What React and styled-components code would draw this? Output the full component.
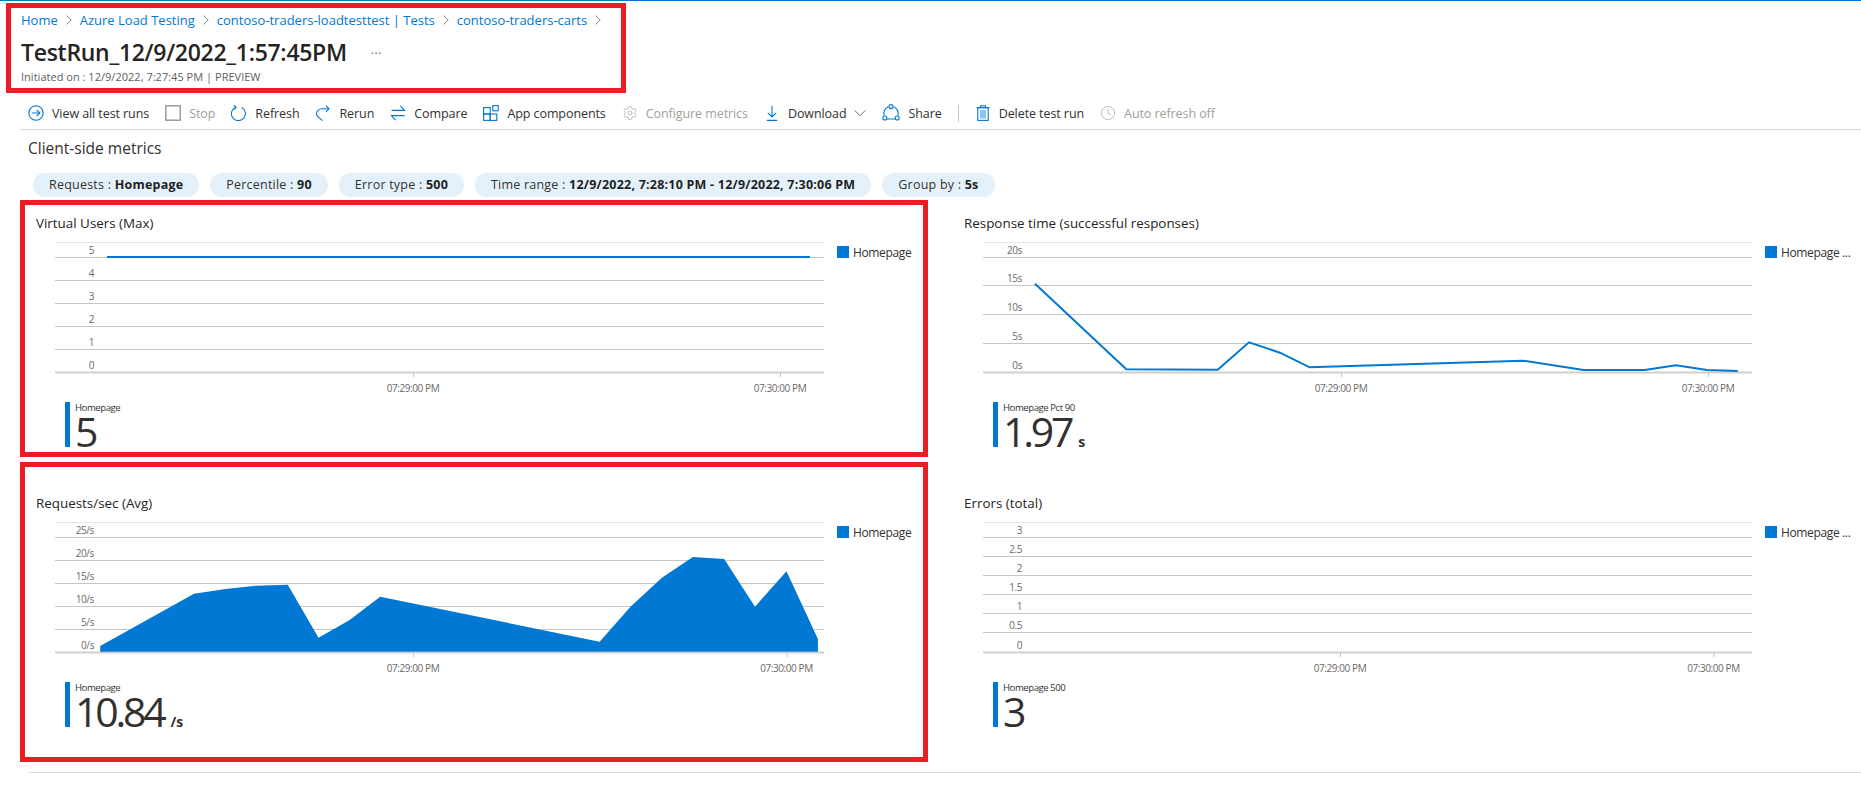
import React from "react";
import styled, { createGlobalStyle } from "styled-components";
import { Settings, Clock } from "lucide-react";

const BLUE = "#0078d4";
const RED = "#ed1c24";
const FONT = `"Open Sans", "Noto Sans", sans-serif`;

const GlobalStyle = createGlobalStyle`
  html, body {
    margin: 0;
    padding: 0;
    background: #fff;
    font-family: ${FONT};
    color: #323130;
  }
`;

const Page = styled.div`
  width: 1861px;
  height: 785px;
  overflow: hidden;
  border-top: 1px solid ${BLUE};
  box-sizing: border-box;
`;

const HeaderBox = styled.header`
  box-sizing: border-box;
  width: 620px;
  height: 90px;
  margin: 2px 0 0 6px;
  padding: 2px 0 0 10px;
  border: 5px solid ${RED};
`;

const Breadcrumb = styled.nav`
  display: flex;
  align-items: center;
  gap: 8px;
  height: 20px;
`;

const Crumb = styled.span`
  font-size: 13px;
  letter-spacing: 0;
  color: ${BLUE};
`;

const TitleRow = styled.div`
  display: flex;
  align-items: center;
  height: 32px;
  margin-top: 6px;
`;

const Title = styled.h1`
  margin: 0;
  font-size: 23px;
  font-weight: 600;
  letter-spacing: -0.29px;
  line-height: 32px;
  color: #252423;
`;

const More = styled.span`
  margin: -6px 0 0 24px;
  font-size: 12px;
  letter-spacing: 0.6px;
  color: #605e5c;
`;

const Subtitle = styled.div`
  margin-top: 1px;
  font-size: 11px;
  letter-spacing: 0.02px;
  line-height: 16px;
  color: #605e5c;
`;

const Toolbar = styled.div`
  display: flex;
  align-items: center;
  gap: 16px;
  height: 32px;
  margin: 4px 0 0 20px;
  padding-left: 8px;
  border-bottom: 1px solid #d9d8d6;
`;

const ToolItem = styled.div`
  display: flex;
  align-items: center;
  gap: 8px;
  font-size: 12.5px;
  letter-spacing: -0.08px;
  white-space: nowrap;
  color: ${({ $disabled }) => ($disabled ? "#a19f9d" : "#323130")};

  svg {
    flex: none;
    display: block;
  }
`;

const ToolDivider = styled.div`
  width: 1px;
  height: 17px;
  background: #c8c6c4;
`;

const SectionTitle = styled.h2`
  margin: 8px 0 0 28px;
  font-size: 15.5px;
  font-weight: 500;
  line-height: 20px;
`;

const ChipRow = styled.div`
  display: flex;
  gap: 11px;
  margin: 15px 0 0 33px;
`;

const Chip = styled.div`
  height: 24px;
  padding: 0 16px;
  border-radius: 12px;
  background: #e5f1fa;
  font-size: 12.5px;
  letter-spacing: 0.22px;
  line-height: 24px;
  white-space: nowrap;

  b {
    font-weight: 700;
    color: #201f1e;
  }
`;

const ChartGrid = styled.div`
  display: grid;
  grid-template-columns: 908px 1fr;
  grid-template-rows: 257px 300px;
  column-gap: 20px;
  row-gap: 5px;
  margin: 3px 0 0 20px;
`;

const Card = styled.section`
  box-sizing: border-box;
  padding-top: ${({ $top }) => $top}px;
  border: 5px solid ${({ $marked }) => ($marked ? RED : "transparent")};
  overflow: hidden;
`;

const CardTitle = styled.h3`
  margin: 0 0 9px 11px;
  font-size: 13.4px;
  font-weight: 400;
  line-height: 20px;
  color: #252423;
`;

const ChartRow = styled.div`
  display: flex;
  margin-left: 30px;
`;

const ChartSvg = styled.svg`
  display: block;
  flex: none;
  font-family: ${FONT};
`;

const Legend = styled.div`
  display: flex;
  align-items: flex-start;
  gap: 4px;
  margin: 4px 0 0 13px;
  font-size: 12px;
  letter-spacing: -0.36px;
  line-height: 14px;
  white-space: nowrap;
`;

const LegendSwatch = styled.span`
  width: 12px;
  height: 12px;
  background: ${BLUE};
`;

const Summary = styled.div`
  box-sizing: border-box;
  height: 45px;
  margin: 4px 0 0 40px;
  padding-left: 5px;
  border-left: 5px solid ${BLUE};
  overflow: hidden;
`;

const SummaryLabel = styled.div`
  font-size: 9.5px;
  letter-spacing: -0.4px;
  line-height: 12px;
`;

const SummaryValue = styled.div`
  font-size: 41px;
  font-weight: 500;
  letter-spacing: -3.2px;
  line-height: 35px;
  color: #323130;

  small {
    margin-left: 7px;
    font-size: 14px;
    font-weight: 700;
    letter-spacing: 0;
  }
`;

const BottomRule = styled.div`
  height: 1px;
  margin: 10px 0 0 28px;
  background: #dedddc;
`;

const Stroke = ({ children, size = 16, color = BLUE, sw = 1.1 }) => (
  <svg width={size} height={size} viewBox="0 0 16 16" fill="none" stroke={color} strokeWidth={sw}>
    {children}
  </svg>
);

const ViewAllIcon = () => (
  <Stroke>
    <circle cx="8" cy="8" r="7.2" />
    <path d="M3.8 8h8M8.6 4.8 11.8 8l-3.2 3.2" />
  </Stroke>
);

const StopIcon = () => (
  <Stroke color="#8f8d8b" sw={1.3}>
    <rect x="0.8" y="0.8" width="14.4" height="14.4" />
  </Stroke>
);

const RefreshIcon = () => (
  <Stroke>
    <path d="M10.6 2.4A7 7 0 1 1 4.6 2.2" />
    <path d="M2.6 0.4 5 2 3.6 4.6" />
  </Stroke>
);

const RerunIcon = () => (
  <Stroke>
    <path d="M14 3.7H7.4C4.6 3.7 1.4 6 1.4 8.6c0 1.6 1 2.8 2 3.6l4 3.4" />
    <path d="M11 0.6 14 3.7 11 6.8" />
  </Stroke>
);

const CompareIcon = () => (
  <Stroke>
    <path d="M1.5 5.4H14.6L10.4 0.8" />
    <path d="M14.6 10.6H1.5L5.6 15.2" />
  </Stroke>
);

const AppIcon = () => (
  <Stroke>
    <rect x="0.6" y="2.6" width="6.6" height="6.4" />
    <rect x="0.6" y="9" width="6.6" height="6.4" />
    <rect x="7.2" y="9" width="6.6" height="6.4" />
    <rect x="9.8" y="0.6" width="5.4" height="5.2" />
  </Stroke>
);

const DownloadIcon = () => (
  <Stroke>
    <path d="M8 0.8v11M3.8 7.8 8 12l4.2-4.2M2.8 15.4h10.4" />
  </Stroke>
);

const ChevronIcon = () => (
  <Stroke color="#605e5c" sw={1.2} size={12}>
    <path d="M0.8 4.4 8 11.6 15.2 4.4" />
  </Stroke>
);

const ShareIcon = () => (
  <svg width="18" height="18" viewBox="0 0 18 18" fill="none" stroke={BLUE} strokeWidth="1.1">
    <path d="M6.4 2.8A7 7 0 0 0 2.2 11.6M15.8 11.6A7 7 0 0 0 11.6 2.8M4.8 15h8.4" />
    <circle cx="9" cy="2.6" r="2" fill="#fff" />
    <circle cx="2.8" cy="14" r="2" fill="#fff" />
    <circle cx="15.2" cy="14" r="2" fill="#fff" />
  </svg>
);

const TrashIcon = () => (
  <Stroke sw={1.1}>
    <path d="M1.6 2.6h12.8M5.6 2.6V0.8h4.8v1.8" />
    <rect x="2.8" y="2.6" width="10.4" height="12.8" />
    <rect x="5" y="5" width="6" height="8.6" fill="#8cc4ee" stroke="none" />
  </Stroke>
);

const CrumbChevron = () => (
  <svg width="6" height="10" viewBox="0 0 6 10" fill="none" stroke="#8a8886" strokeWidth="1">
    <path d="M0.6 0.6 5.2 5 0.6 9.4" />
  </svg>
);

const axisColor = "#6b6967";

const Chart = ({ lines, labels, ticks, line, area }) => {
  const base = lines[lines.length - 1];
  return (
    <ChartSvg width="769" height="156" viewBox="0 0 769 156">
      <line x1="0" x2="769" y1="0.5" y2="0.5" stroke="#e6e5e4" />
      {lines.map((y, i) => (
        <line
          key={y}
          x1="0"
          x2="769"
          y1={y + 0.5}
          y2={y + 0.5}
          stroke={i === lines.length - 1 ? "#d2d0ce" : "#c8c6c4"}
          strokeWidth={i === lines.length - 1 ? 2 : 1}
        />
      ))}
      {labels.map((text, i) => (
        <text key={text} x="39" y={lines[i] - 3.5} fontSize="10" textAnchor="end" letterSpacing="-0.4" fill={axisColor}>
          {text}
        </text>
      ))}
      {ticks.map((x, i) => (
        <g key={x}>
          <line x1={x + 0.5} x2={x + 0.5} y1={base} y2={base + 5} stroke="#c8c6c4" />
          <text x={x} y="150" fontSize="10" textAnchor="middle" letterSpacing="-0.42" fill={axisColor}>
            {i === 0 ? "07:29:00 PM" : "07:30:00 PM"}
          </text>
        </g>
      ))}
      {area && <polygon points={area} fill={BLUE} />}
      {line && <polyline points={line} fill="none" stroke={BLUE} strokeWidth="2" />}
    </ChartSvg>
  );
};

const tools = [
  { icon: <ViewAllIcon />, text: "View all test runs" },
  { icon: <StopIcon />, text: "Stop", disabled: true },
  { icon: <RefreshIcon />, text: "Refresh" },
  { icon: <RerunIcon />, text: "Rerun" },
  { icon: <CompareIcon />, text: "Compare" },
  { icon: <AppIcon />, text: "App components" },
  { icon: <Settings size={16} strokeWidth={1} />, text: "Configure metrics", disabled: true },
  { icon: <DownloadIcon />, text: "Download", chevron: true },
  { icon: <ShareIcon />, text: "Share" },
  { divider: true },
  { icon: <TrashIcon />, text: "Delete test run" },
  { icon: <Clock size={16} strokeWidth={1} />, text: "Auto refresh off", disabled: true },
];

const chips = [
  ["Requests", "Homepage"],
  ["Percentile", "90"],
  ["Error type", "500"],
  ["Time range", "12/9/2022, 7:28:10 PM - 12/9/2022, 7:30:06 PM"],
  ["Group by", "5s"],
];

const cards = [
  {
    title: "Virtual Users (Max)",
    marked: true,
    top: 8,
    legend: "Homepage",
    chart: {
      lines: [15, 38, 61, 84, 107, 130],
      labels: ["5", "4", "3", "2", "1", "0"],
      ticks: [358, 725],
      line: "52,15 755,15",
    },
    label: "Homepage",
    value: "5",
  },
  {
    title: "Response time (successful responses)",
    top: 8,
    legend: "Homepage ...",
    chart: {
      lines: [15, 43, 72, 101, 130],
      labels: ["20s", "15s", "10s", "5s", "0s"],
      ticks: [358, 725],
      line: "52,41.7 143.3,127.3 234.7,127.7 266,100.3 297,110.7 326.6,125.3 540,118.7 600.6,128 661.7,128 693,123.3 724,128 754.8,129",
    },
    label: "Homepage Pct 90",
    value: "1.97",
    unit: "s",
  },
  {
    title: "Requests/sec (Avg)",
    marked: true,
    top: 26,
    legend: "Homepage",
    chart: {
      lines: [15, 38, 61, 84, 107, 130],
      labels: ["25/s", "20/s", "15/s", "10/s", "5/s", "0/s"],
      ticks: [358, 731.5],
      area: "45.2,124 139,71.7 170.4,67 201.2,63.7 232.7,62.7 263.5,115.7 294.3,98.3 325.2,74.7 544.6,119.7 575.5,84.7 606.9,55.7 637.8,35 669.2,37 700,84.7 731.5,49.3 762.9,117 762.9,129.7 45.2,129.7",
    },
    label: "Homepage",
    value: "10.84",
    unit: "/s",
  },
  {
    title: "Errors (total)",
    top: 26,
    legend: "Homepage ...",
    chart: {
      lines: [15, 34, 53, 72, 91, 110, 130],
      labels: ["3", "2.5", "2", "1.5", "1", "0.5", "0"],
      ticks: [357, 730.5],
    },
    label: "Homepage 500",
    value: "3",
  },
];

const App = () => {
  return (
    <Page>
      <GlobalStyle />
      <HeaderBox>
        <Breadcrumb>
          {["Home", "Azure Load Testing", "contoso-traders-loadtesttest | Tests", "contoso-traders-carts"].map((item) => (
            <React.Fragment key={item}>
              <Crumb>{item}</Crumb>
              <CrumbChevron />
            </React.Fragment>
          ))}
        </Breadcrumb>
        <TitleRow>
          <Title>TestRun_12/9/2022_1:57:45PM</Title>
          <More>...</More>
        </TitleRow>
        <Subtitle>Initiated on : 12/9/2022, 7:27:45 PM | PREVIEW</Subtitle>
      </HeaderBox>

      <Toolbar>
        {tools.map((tool, index) =>
          tool.divider ? (
            <ToolDivider key={index} />
          ) : (
            <ToolItem key={tool.text} $disabled={tool.disabled}>
              {tool.icon}
              {tool.text}
              {tool.chevron && <ChevronIcon />}
            </ToolItem>
          )
        )}
      </Toolbar>

      <SectionTitle>Client-side metrics</SectionTitle>

      <ChipRow>
        {chips.map(([name, value]) => (
          <Chip key={name}>
            {name} : <b>{value}</b>
          </Chip>
        ))}
      </ChipRow>

      <ChartGrid>
        {cards.map((card) => (
          <Card key={card.title} $marked={card.marked} $top={card.top}>
            <CardTitle>{card.title}</CardTitle>
            <ChartRow>
              <Chart {...card.chart} />
              <Legend>
                <LegendSwatch />
                {card.legend}
              </Legend>
            </ChartRow>
            <Summary>
              <SummaryLabel>{card.label}</SummaryLabel>
              <SummaryValue>
                {card.value}
                {card.unit && <small>{card.unit}</small>}
              </SummaryValue>
            </Summary>
          </Card>
        ))}
      </ChartGrid>

      <BottomRule />
    </Page>
  );
};

export default App;
